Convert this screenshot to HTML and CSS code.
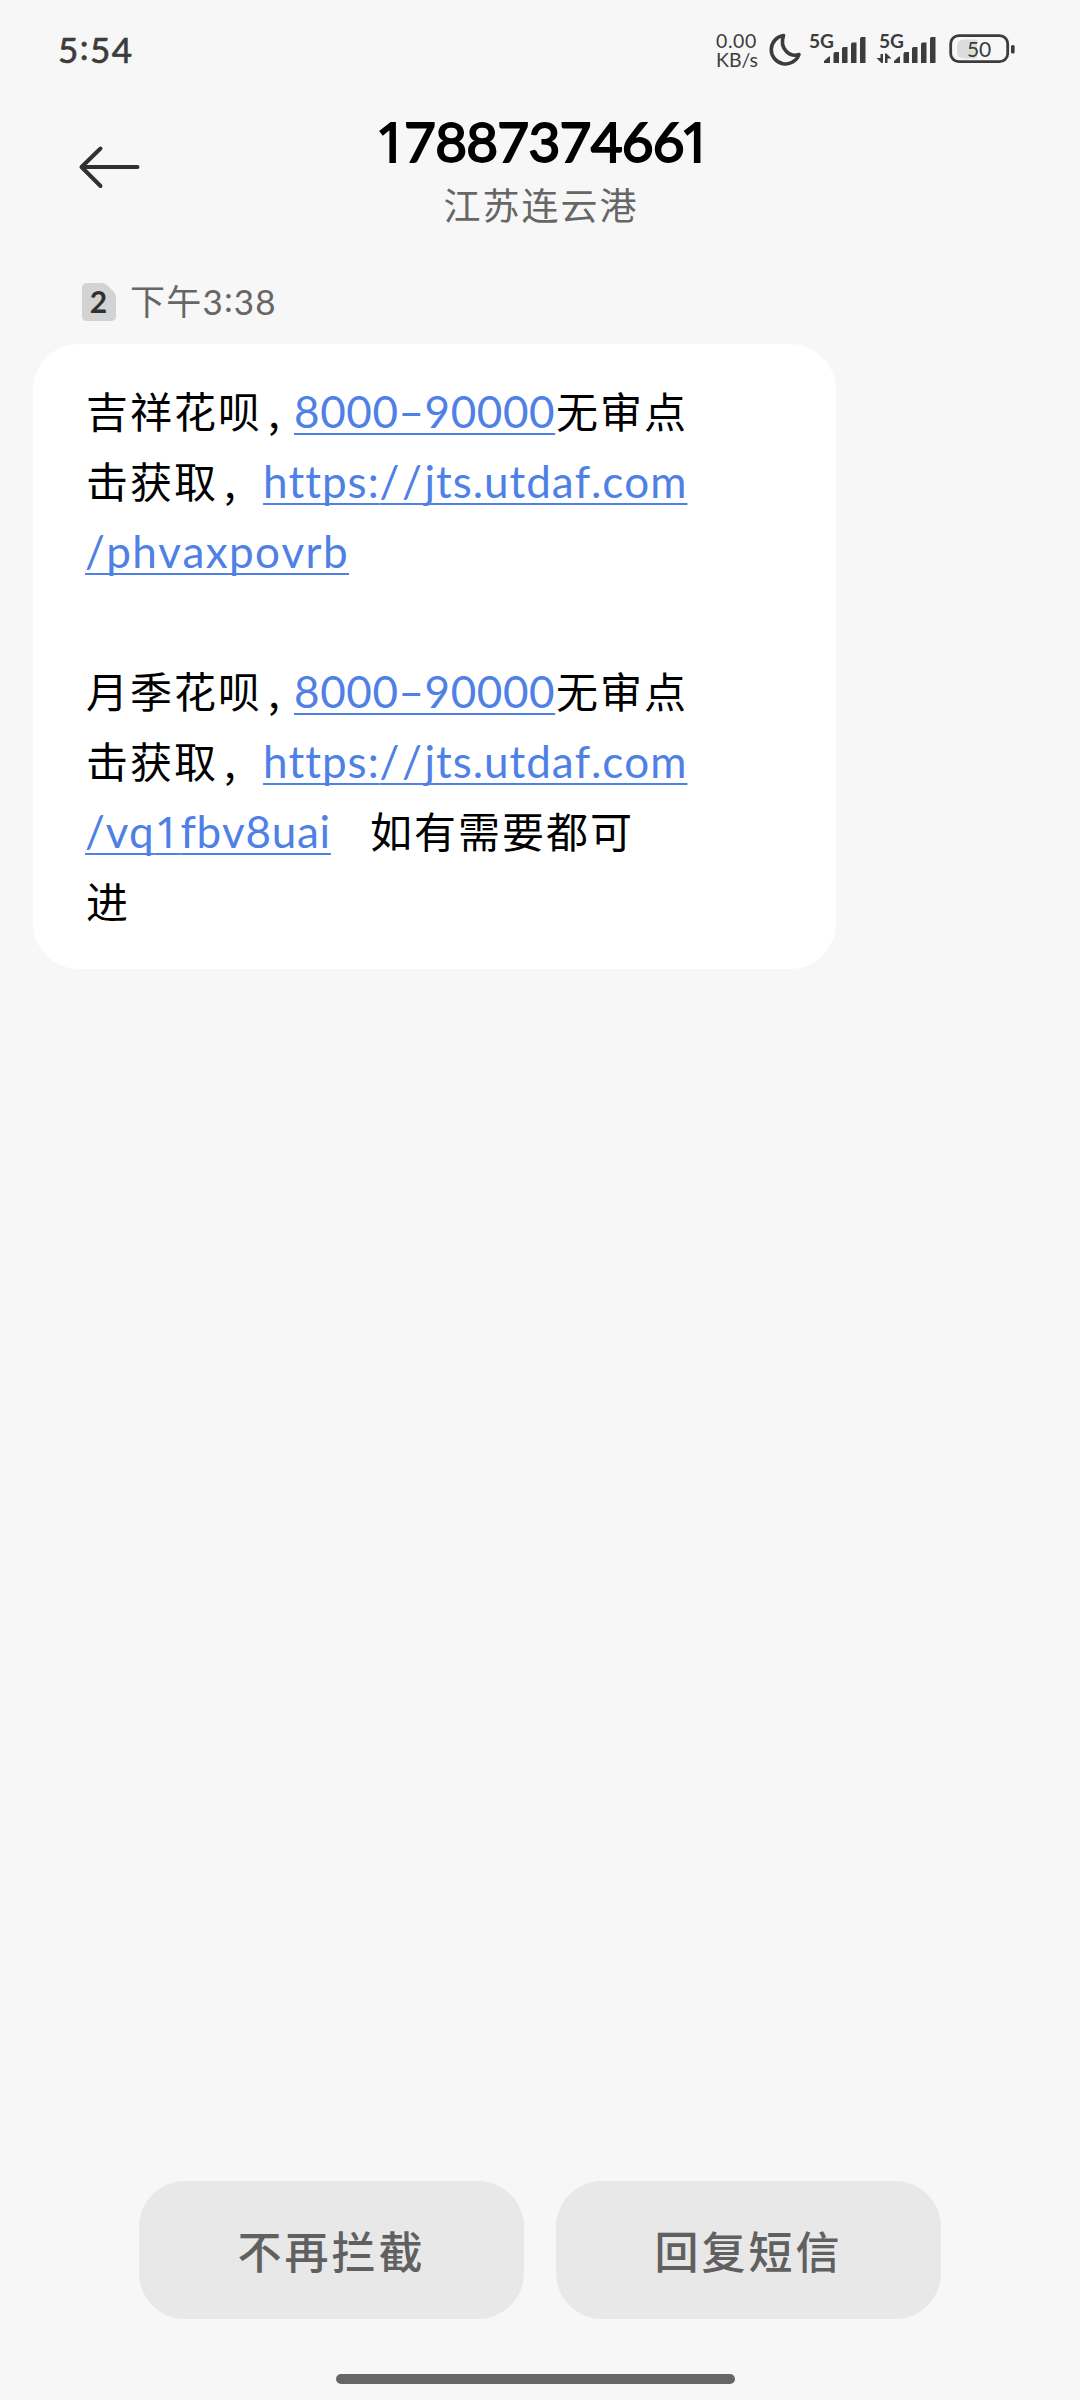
FILE: index.html
```
<!DOCTYPE html>
<html lang="zh-CN">
<head>
<meta charset="utf-8">
<title>17887374661</title>
<link rel="stylesheet" href="styles.css">
</head>
<body>
<div class="screen">
  <div class="status">
    <span class="clock">5<span class="colon">:</span>54</span>
    <div class="net"><span class="rate">0.00</span><span class="unit">KB/s</span></div>
    <svg class="moon" width="34" height="36" viewBox="0 0 34 36" fill="none" stroke="#3c3c3c" stroke-width="3.6" stroke-linejoin="round"><path d="M15.5 3.5A14.3 14.3 0 1 0 31 22.500C22 25.500 11 17 15.500 3.500Z"/></svg>
    <svg class="signal" width="58" height="32" viewBox="0 0 58 32" fill="#3c3c3c"><text class="gen" x="0" y="14.500" textLength="25" lengthAdjust="spacingAndGlyphs">5G</text><path d="M15 30v-2l5-4.500h1v6.500zM24.500 30V20.500l1-1.500h4.500v11zM33 30V15.500l1-1.500h4.500v16zM42 30V11l1-1.500h4.500V30zM51 30V5.500l1-1.500h4.500v26z"/></svg>
    <svg class="signal2" width="60" height="32" viewBox="0 0 60 32" fill="#3c3c3c"><text class="gen" x="2" y="14.500" textLength="25" lengthAdjust="spacingAndGlyphs">5G</text><path d="M17 30v-2l5-4.500h1v6.500zM26.500 30V20.500l1-1.500h4.500v11zM35 30V15.500l1-1.500h4.500v16zM44 30V11l1-1.500h4.500V30zM53 30V5.500l1-1.500h4.500v26zM3.500 21h2.500v9h-1.500l-5-5h4zM8 30v-9.500h1.500l5 5h-4v4.500z"/></svg>
    <svg class="battery" width="68" height="30" viewBox="0 0 68 30"><path d="M15 5.500h13v19H15q-7 0-7-7v-5q0-7 7-7z" fill="#dcdcdc"/><rect x="1.700" y="1.700" width="57" height="26" rx="8" fill="none" stroke="#3c3c3c" stroke-width="2.800"/><rect x="62" y="11" width="3.600" height="8.500" rx="1.500" fill="#3c3c3c"/><text class="charge" x="18" y="22.500">50</text></svg>
  </div>

  <header class="header">
    <svg class="back" width="64" height="46" viewBox="0 0 64 46" fill="none" stroke="#303030" stroke-width="4" stroke-linecap="round" stroke-linejoin="round"><path d="M23.500 4.500L4.500 23L23.500 42M5 23H60.500"/></svg>
    <div class="who">
      <h1 class="number"><span class="one">1</span>788737466<span class="one">1</span></h1>
      <div class="region">江苏连云港</div>
    </div>
  </header>

  <main class="thread">
    <div class="stamp">
      <svg class="sim" width="34" height="38" viewBox="0 0 34 38"><path d="M5 0H20Q23 0 25 2L32 9Q34 11 34 14V33Q34 38 29 38H5Q0 38 0 33V5Q0 0 5 0Z" fill="#d3d3d3"/><text class="simno" x="16.500" y="29.500" text-anchor="middle">2</text></svg>
      <span class="time">下午3<span class="colon">:</span>38</span>
    </div>
    <div class="bubble">
      <p class="line">吉祥花呗<span class="comma narrow">,</span><a class="link amount">8000–90000</a>无审点</p>
      <p class="line">击获取<span class="comma">,</span><a class="link host">https:<span class="slashes">//</span>jts.utdaf.com</a></p>
      <p class="line"><a class="link path1">/phvaxpovrb</a></p>
      <p class="line">&nbsp;</p>
      <p class="line">月季花呗<span class="comma narrow">,</span><a class="link amount">8000–90000</a>无审点</p>
      <p class="line">击获取<span class="comma">,</span><a class="link host">https:<span class="slashes">//</span>jts.utdaf.com</a></p>
      <p class="line"><a class="link path2">/vq<span class="one">1</span>fbv8uai</a><span class="after">如有需要都可</span></p>
      <p class="line">进</p>
    </div>
  </main>

  <footer class="footer">
    <div class="actions">
      <button class="action">不再拦截</button>
      <button class="action">回复短信</button>
    </div>
    <div class="homebar"></div>
  </footer>
</div>
</body>
</html>
```
FILE: styles.css
```
* { box-sizing: border-box; margin: 0; padding: 0; }
body {
  background: #f7f7f7;
  font-family: Lato, "Noto Sans CJK SC", sans-serif;
}
.screen {
  width: 1080px;
  height: 2400px;
  display: flex;
  flex-direction: column;
  overflow: hidden;
}
.one { font-family: "Noto Sans", sans-serif; }
.colon { vertical-align: 3px; line-height: 1; }
svg { overflow: visible; }

.status {
  height: 100px;
  padding: 0 63px 0 58px;
  display: flex;
  align-items: flex-start;
  color: #3c3c3c;
}
.clock {
  margin-top: 28px;
  margin-right: auto;
  font-size: 35px;
  line-height: 42px;
  letter-spacing: 1.5px;
  -webkit-text-stroke: 0.7px;
}
.net {
  width: 44px;
  margin-top: 31px;
  margin-right: 8px;
  display: flex;
  flex-direction: column;
  font-size: 19.5px;
  line-height: 19px;
  white-space: nowrap;
}
.rate { letter-spacing: 0.6px; }
.unit { letter-spacing: 0; }
.moon { margin-top: 32px; margin-right: 7px; }
.signal { margin-top: 33px; margin-right: 10px; }
.signal2 { margin-top: 33px; margin-right: 12px; }
.battery { margin-top: 34px; }
.gen { font-size: 19px; font-weight: 700; }
.charge { font-size: 21px; letter-spacing: -0.3px; fill: #3c3c3c; }

.header {
  height: 150px;
  padding: 0 77px;
  display: flex;
  align-items: flex-start;
}
.back { margin-top: 44px; }
.who {
  flex: 1;
  margin-right: 62px;
  display: flex;
  flex-direction: column;
  align-items: center;
}
.number {
  margin: 7px 0 0 6px;
  font-size: 55px;
  font-weight: 400;
  line-height: 68px;
  letter-spacing: -0.8px;
  color: #000;
  -webkit-text-stroke: 1.8px;
}
.number .one { margin: 0 -2px 0 -4px; }
.region {
  margin-top: 6px;
  font-size: 37px;
  line-height: 50px;
  letter-spacing: 2px;
  color: #666;
}

.thread { flex: 1; padding: 31px 33px 0; }
.stamp {
  height: 63px;
  padding-left: 49px;
  display: flex;
  align-items: flex-start;
}
.sim { margin-top: 2px; margin-right: 14px; }
.simno { font-size: 30px; font-weight: 700; fill: #303030; }
.time {
  font-size: 35px;
  line-height: 40px;
  letter-spacing: 1.2px;
  color: #666;
}
.bubble {
  width: 803px;
  height: 625px;
  padding: 31px 53px;
  border-radius: 46px;
  background: #fff;
}
.line {
  height: 70px;
  font-family: "Noto Sans CJK SC", sans-serif;
  font-size: 42px;
  line-height: 70px;
  letter-spacing: 2px;
  white-space: nowrap;
  color: #000;
}
.comma {
  display: inline-block;
  width: 45px;
  padding-left: 6px;
}
.narrow { width: 32px; }
.link {
  display: inline-block;
  font-family: Lato, sans-serif;
  font-size: 44px;
  font-kerning: none;
  color: #4f80e6;
  text-decoration: underline;
  text-decoration-thickness: 2px;
  text-underline-offset: 5px;
  text-decoration-skip-ink: none;
}
.amount { width: 262px; letter-spacing: 0.6px; }
.host { width: 424px; letter-spacing: 0.96px; }
.slashes { letter-spacing: 2.5px; }
.path1 { width: 264px; margin-left: -1px; letter-spacing: 1.4px; }
.path2 { width: 246px; margin-left: -1px; letter-spacing: 0.75px; }
.after { margin-left: 39px; }

.footer {
  height: 219px;
  display: flex;
  flex-direction: column;
  align-items: center;
}
.actions { display: flex; gap: 32px; }
.action {
  width: 385px;
  height: 138px;
  border: 0;
  border-radius: 46px;
  background: #e8e8e8;
  font: 500 44px/60px "Noto Sans CJK SC", sans-serif;
  letter-spacing: 3px;
  color: #606060;
}
.homebar {
  width: 399px;
  height: 10px;
  margin-top: 55px;
  margin-right: 9px;
  border-radius: 5px;
  background: #666;
}
```
